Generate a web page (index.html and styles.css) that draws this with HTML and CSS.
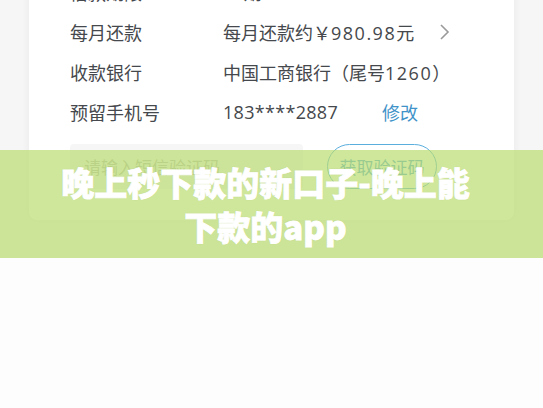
FILE: index.html
```html
<!DOCTYPE html>
<html lang="zh-CN">
<head>
  <meta charset="UTF-8">
  <meta name="viewport" content="width=device-width, initial-scale=1.0">
  <title>晚上秒下款的新口子-晚上能下款的app</title>
  <link rel="stylesheet" href="styles.css">
</head>
<body>
  <div class="cover">
    <div class="shot">
      <div class="card">
        <div class="row">
          <span class="label">借款期限</span>
          <span class="value">12期</span>
        </div>
        <div class="row">
          <span class="label">每月还款</span>
          <span class="value">每月还款约￥<span class="num">980.98</span>元</span>
          <svg class="chevron" width="12" height="18" viewBox="0 0 12 18"><polyline points="2,2 9,9 2,16" fill="none" stroke="#9a9a9a" stroke-width="1.6"/></svg>
        </div>
        <div class="row">
          <span class="label">收款银行</span>
          <span class="value">中国工商银行（尾号<span class="num">1260</span>）</span>
        </div>
        <div class="row">
          <span class="label">预留手机号</span>
          <span class="value phone">183****2887</span>
          <a class="edit">修改</a>
        </div>
        <div class="verify">
          <div class="code-input">请输入短信验证码</div>
          <button class="code-btn">获取验证码</button>
        </div>
      </div>
    </div>

    <div class="caption">
      <h1>晚上秒下款的新口子-晚上能下款的app</h1>
    </div>
  </div>
  <div class="below"></div>
</body>
</html>
```

FILE: styles.css
```css
/* Reset y tipografía */
* { box-sizing: border-box; margin: 0; padding: 0; }
body { font-family: "Noto Sans CJK SC", "Noto Sans", sans-serif; background: #fdfdfd; overflow: hidden; }

/* Captura del formulario */
.cover { position: relative; }
.shot { height: 258px; background: #f6f6f6; overflow: hidden; }
.card {
  margin: -28px 29px 0;
  background: #fff;
  border-radius: 8px;
  box-shadow: 0 0 8px rgba(0,0,0,0.06);
  padding: 0 0 31px 41px;
}
.row { height: 40px; display: flex; align-items: center; font-size: 18px; color: #45484c; }
.label { width: 153px; }
.value { color: #45484c; font-family: "Open Sans", "Noto Sans CJK SC", sans-serif; }
.num { letter-spacing: 1.5px; }
.phone { width: 159px; letter-spacing: 0.3px; }
.chevron { margin-left: 25px; }
.edit { color: #3f93c9; font-size: 18px; }

.verify { display: flex; margin-top: 12px; gap: 24px; }
.code-input { width: 233px; height: 45px; background: #f6f6f7; border-radius: 4px; color: #b8b8b8; font-size: 17px; display: flex; align-items: center; padding-left: 14px; }
.code-btn { width: 110px; height: 45px; border: 1.5px solid #5aaede; border-radius: 23px; background: #fff; color: #4a9fd5; font-size: 17px; font-family: inherit; }

/* Banda del título */
.caption {
  position: absolute; left: 0; right: 0; top: 150px; height: 108px;
  background: rgba(186,221,112,0.7);
  display: flex; align-items: center; justify-content: center;
}
.caption h1 {
  max-width: 430px;
  margin-right: 12px;
  color: #fff; font-size: 33px; font-weight: 900; line-height: 44px;
  text-align: center;
  -webkit-text-stroke: 0.8px #fff;
  text-shadow: 0 0 2px rgba(0,0,0,0.08);
}

.below { height: 150px; background: #fdfdfd; }
```
